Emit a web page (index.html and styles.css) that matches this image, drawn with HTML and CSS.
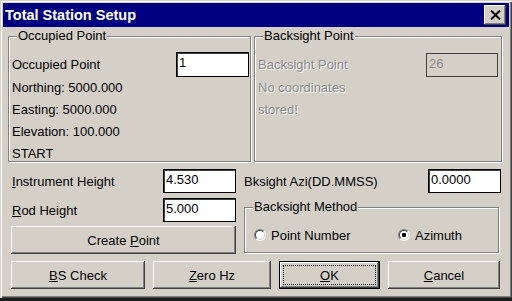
FILE: index.html
```html
<!DOCTYPE html>
<html>
<head>
<meta charset="utf-8">
<title>Total Station Setup</title>
<link rel="stylesheet" href="styles.css">
</head>
<body>
<div class="window">
  <div class="titlebar">
    <span class="title">Total Station Setup</span>
    <span class="close"><svg width="11" height="10" viewBox="0 0 11 10"><path d="M1 0.5 L10 9.5 M10 0.5 L1 9.5" stroke="#000" stroke-width="2" fill="none"/></svg></span>
  </div>
  <div class="content">
    <div class="groups">
      <div class="group occupied">
        <span class="legend">Occupied Point</span>
        <div class="row first"><span>Occupied Point</span><span class="input">1</span></div>
        <div class="row">Northing: 5000.000</div>
        <div class="row">Easting: 5000.000</div>
        <div class="row">Elevation: 100.000</div>
        <div class="row">START</div>
      </div>
      <div class="group backsight">
        <span class="legend">Backsight Point</span>
        <div class="row first disabled"><span>Backsight Point</span><span class="input off">26</span></div>
        <div class="row disabled">No coordinates</div>
        <div class="row disabled">stored!</div>
      </div>
    </div>
    <div class="lower">
      <div class="col leftcol">
        <div class="field"><span><u>I</u>nstrument Height</span><span class="input">4.530</span></div>
        <div class="field rod"><span><u>R</u>od Height</span><span class="input">5.000</span></div>
        <div class="btn create">Create&nbsp;<u>P</u>oint</div>
      </div>
      <div class="col rightcol">
        <div class="field"><span>Bksight Azi(DD.MMSS)</span><span class="input">0.0000</span></div>
        <div class="group method">
          <span class="legend">Backsight Method</span>
          <div class="radios">
            <span class="radio first-radio"><span class="circle"><span class="inner"></span></span><span>Point Number</span></span>
            <span class="radio"><span class="circle"><span class="inner"><span class="dot"></span></span></span><span>Azimuth</span></span>
          </div>
        </div>
      </div>
    </div>
    <div class="buttons">
      <div class="btn b-bs"><span><u>B</u>S Check</span></div>
      <div class="btn b-zero"><span><u>Z</u>ero Hz</span></div>
      <div class="btn b-ok default"><span class="focus"><span><u>O</u>K</span></span></div>
      <div class="btn b-cancel"><span><u>C</u>ancel</span></div>
    </div>
  </div>
</div>
</body>
</html>
```

FILE: styles.css
```css
* { box-sizing: border-box; }
html, body { margin: 0; padding: 0; }
body {
  width: 512px;
  height: 301px;
  overflow: hidden;
  background: #1c1c1c;
  font-family: "Liberation Sans", Arial, sans-serif;
  font-size: 13px;
  color: #000;
}
.window {
  width: 512px;
  height: 298px;
  background: #d4d0c8;
  padding: 3px 3px 0 3px;
  box-shadow: inset 1px 1px #d4d0c8, inset 2px 2px #fff, inset -1px -1px #404040, inset -2px -2px #808080;
}
.titlebar {
  height: 24px;
  background: #000080;
  display: flex;
  align-items: center;
  justify-content: space-between;
  padding: 0 3px 0 2px;
}
.title {
  color: #fff;
  font-weight: bold;
  font-size: 14.5px;
  line-height: 24px;
}
.close {
  width: 22px;
  height: 20px;
  background: #d4d0c8;
  display: flex;
  align-items: center;
  justify-content: center;
  box-shadow: inset -1px -1px #404040, inset 1px 1px #fff, inset -2px -2px #808080;
}
.content {
  padding-top: 9px;
}
.groups {
  display: flex;
  gap: 3px;
  margin-left: 5px;
}
.group {
  position: relative;
  border: 1px solid #808080;
  box-shadow: inset 1px 1px #fff, 1px 1px #fff;
}
.legend {
  position: absolute;
  top: -8px;
  left: 8px;
  padding: 0 1px;
  line-height: 14px;
  background: #d4d0c8;
  white-space: nowrap;
}
.occupied {
  width: 243px;
  height: 126px;
  padding: 15px 1px 0 3px;
}
.backsight {
  width: 248px;
  height: 126px;
  padding: 15px 3px 0 3px;
}
.row {
  height: 22px;
  line-height: 22px;
  white-space: nowrap;
}
.row.first {
  height: 25px;
  display: flex;
  justify-content: space-between;
  align-items: center;
}
.input {
  width: 73px;
  height: 25px;
  background: #fff;
  border: 1px solid #000;
  box-shadow: inset 1px 1px #404040;
  padding: 1px 2px;
  line-height: 17px;
  color: #000;
  text-shadow: none;
}
.input.off {
  width: 72px;
  height: 24px;
  background: #d4d0c8;
  border-color: #404040;
  box-shadow: none;
  color: #8a8a8a;
}
.disabled {
  color: #8a8a8a;
  text-shadow: 1px 1px 0 #fff;
}
.lower {
  display: flex;
  gap: 7px;
  margin: 7px 0 0 8px;
}
.col {
  display: flex;
  flex-direction: column;
}
.leftcol { width: 225px; }
.rightcol { width: 258px; }
.field {
  display: flex;
  justify-content: space-between;
  align-items: center;
  height: 24px;
  padding-left: 1px;
  white-space: nowrap;
}
.field .input { height: 24px; }
.rightcol .field { padding-left: 1px; }
.rod { margin-top: 5px; }
.btn {
  height: 28px;
  display: flex;
  align-items: center;
  justify-content: center;
  background: #d4d0c8;
  box-shadow: inset -1px -1px #404040, inset 1px 1px #fff, inset -2px -2px #808080;
  white-space: nowrap;
}
.create { margin-top: 4px; }
.method {
  margin-top: 14px;
  margin-left: 1px;
  width: 255px;
  height: 46px;
  padding: 19px 0 0 9px;
}
.radios {
  display: flex;
  align-items: center;
  height: 16px;
}
.radio {
  display: flex;
  align-items: center;
  gap: 5px;
  white-space: nowrap;
}
.first-radio { width: 144px; }
.circle {
  width: 12px;
  height: 12px;
  border-radius: 50%;
  border: 1px solid;
  border-color: #808080 #fff #fff #808080;
  display: flex;
}
.inner {
  flex: 1;
  border-radius: 50%;
  border: 1px solid;
  border-color: #404040 #d4d0c8 #d4d0c8 #404040;
  background: #fff;
  display: flex;
  align-items: center;
  justify-content: center;
}
.dot {
  width: 4px;
  height: 4px;
  border-radius: 1px;
  background: #000;
}
.buttons {
  display: flex;
  gap: 8px;
  margin: 7px 0 0 8px;
}
.b-bs { width: 134px; }
.b-zero { width: 118px; }
.b-ok { width: 101px; }
.b-cancel { width: 112px; }
.btn.default {
  border: 1px solid #000;
  padding: 3px;
  align-items: stretch;
}
.focus {
  flex: 1;
  display: flex;
  align-items: center;
  justify-content: center;
  border: 1px dotted #000;
}
```
